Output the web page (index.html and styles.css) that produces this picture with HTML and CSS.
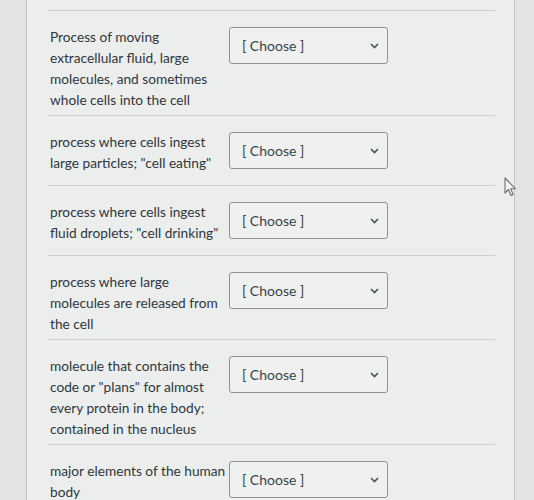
FILE: index.html
```html
<!DOCTYPE html>
<html lang="en">
<head>
    <meta charset="UTF-8">
    <meta name="viewport" content="width=device-width, initial-scale=1.0">
    <title>Matching Question</title>
    <link rel="stylesheet" href="styles.css">
</head>
<body>
    <div id="question">
        <div class="match-row">
            <div class="prompt">Process of moving extracellular fluid, large molecules, and sometimes whole cells into the cell</div>
            <div class="choose"><span>[ Choose ]</span><svg width="9" height="6" viewBox="0 0 9 6"><path d="M1 1 L4.5 4.5 L8 1" fill="none" stroke="#4a5256" stroke-width="1.6"/></svg></div>
        </div>
        <div class="match-row">
            <div class="prompt">process where cells ingest large particles; "cell eating"</div>
            <div class="choose"><span>[ Choose ]</span><svg width="9" height="6" viewBox="0 0 9 6"><path d="M1 1 L4.5 4.5 L8 1" fill="none" stroke="#4a5256" stroke-width="1.6"/></svg></div>
        </div>
        <div class="match-row">
            <div class="prompt">process where cells ingest fluid droplets; "cell drinking"</div>
            <div class="choose"><span>[ Choose ]</span><svg width="9" height="6" viewBox="0 0 9 6"><path d="M1 1 L4.5 4.5 L8 1" fill="none" stroke="#4a5256" stroke-width="1.6"/></svg></div>
        </div>
        <div class="match-row">
            <div class="prompt">process where large molecules are released from the cell</div>
            <div class="choose"><span>[ Choose ]</span><svg width="9" height="6" viewBox="0 0 9 6"><path d="M1 1 L4.5 4.5 L8 1" fill="none" stroke="#4a5256" stroke-width="1.6"/></svg></div>
        </div>
        <div class="match-row">
            <div class="prompt">molecule that contains the code or "plans" for almost every protein in the body; contained in the nucleus</div>
            <div class="choose"><span>[ Choose ]</span><svg width="9" height="6" viewBox="0 0 9 6"><path d="M1 1 L4.5 4.5 L8 1" fill="none" stroke="#4a5256" stroke-width="1.6"/></svg></div>
        </div>
        <div class="match-row">
            <div class="prompt">major elements of the human body</div>
            <div class="choose"><span>[ Choose ]</span><svg width="9" height="6" viewBox="0 0 9 6"><path d="M1 1 L4.5 4.5 L8 1" fill="none" stroke="#4a5256" stroke-width="1.6"/></svg></div>
        </div>

        <!-- mouse pointer left on the screen -->
        <svg class="pointer" width="13" height="20" viewBox="0 0 13 20">
            <path d="M1 1 L1 16 L4.5 12.5 L7 18.5 L9.2 17.6 L6.8 11.8 L11.5 11.8 Z" fill="#f4f5f5" stroke="#6b6f72" stroke-width="1.1" stroke-linejoin="round"/>
        </svg>
    </div>
</body>
</html>
```

FILE: styles.css
```css
body {
    margin: 0;
    background-color: #e3e4e2;
    font-family: Lato, "Open Sans", sans-serif;
    color: #2e373c;
}

#question {
    position: relative;
    margin-left: 26px;
    width: 489px;
    min-height: 100vh;
    box-sizing: border-box;
    padding: 10px 19px 0 21px;
    background-color: #eceeee;
    border-left: 1px solid #c3c5c5;
    border-right: 1px solid #c3c5c5;
}

.match-row {
    display: flex;
    align-items: flex-start;
    border-top: 1px solid #cfd1d1;
    padding: 15px 0 5px 2px;
}

.prompt {
    width: 178px;
    font-size: 13.7px;
    line-height: 21px;
    margin-right: 1px;
}

.choose {
    display: flex;
    align-items: center;
    justify-content: space-between;
    width: 159px;
    height: 37px;
    box-sizing: border-box;
    margin: 1px 0 11px;
    padding: 0 8px 0 12px;
    border: 1px solid #8e9294;
    border-radius: 3px;
    background-color: #eff1f1;
    font-size: 14px;
    color: #3a4246;
}

.pointer {
    position: absolute;
    left: 477px;
    top: 177px;
}
```
